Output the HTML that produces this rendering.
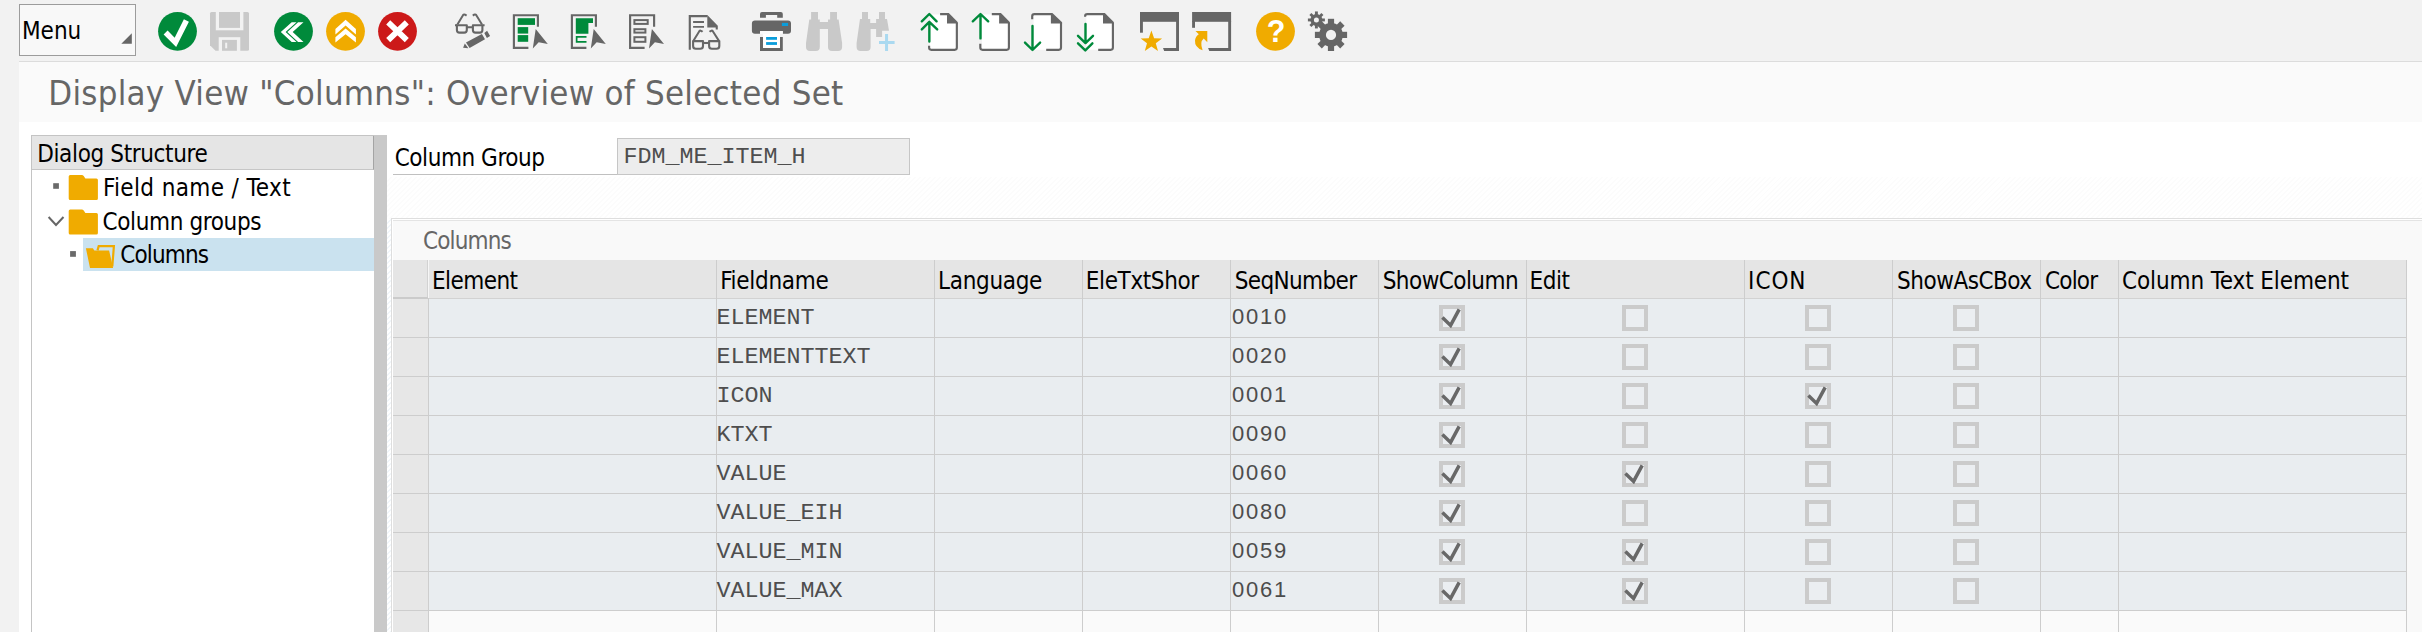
<!DOCTYPE html>
<html><head><meta charset="utf-8"><title>Display View "Columns": Overview of Selected Set</title>
<style>
html,body{margin:0;padding:0}
body{width:2422px;height:632px;overflow:hidden;position:relative;background:#f2f2f2;font-family:"DejaVu Sans Condensed", "DejaVu Sans", "Liberation Sans", sans-serif;}
.t{position:absolute;white-space:nowrap;display:block}
.u{font-family:"DejaVu Sans Condensed", "DejaVu Sans", "Liberation Sans", sans-serif;font-stretch:condensed}
.m{font-family:"Liberation Mono", monospace}
.d{font-family:"Liberation Sans",sans-serif}
.a{position:absolute}
</style></head><body>
<!-- toolbar -->
<div class="a" style="left:0;top:0;width:2422px;height:61px;background:#f2f2f2"></div>
<div class="a" style="left:19px;top:61px;width:2403px;height:1px;background:#dcdcdc"></div>
<div class="a" style="left:19px;top:4px;width:115px;height:50px;border:1px solid #9c9c9c;background:#f8f8f8"></div>
<svg class="a" style="left:119px;top:31px" width="16" height="16" viewBox="119 31 16 16"><path d="M131.8,33.2 V43.7 H121.3 Z" fill="#666"/></svg>
<svg style="position:absolute;left:0;top:0" width="1400" height="62" viewBox="0 0 1400 62"><circle cx="177.5" cy="31.3" r="19.4" fill="#008a3b"/><path d="M165.6,32.6 L175.4,42.4 L186.4,20.6" fill="none" stroke="#fff" stroke-width="5.6" stroke-linejoin="miter"/><path d="M211.5,12 H247.5 Q249,12 249,13.5 V49.3 Q249,50.8 247.5,50.8 H215.5 L210,45.3 V13.5 Q210,12 211.5,12 Z" fill="#c9c9c9"/><rect x="215.8" y="11.5" width="27.6" height="18.8" fill="#f2f2f2"/><rect x="219" y="12" width="21" height="15.9" fill="#c9c9c9"/><rect x="218.7" y="37.2" width="21.6" height="14" fill="#f2f2f2"/><rect x="222" y="39.9" width="14.9" height="10.9" fill="#c9c9c9"/><rect x="225.2" y="42.7" width="2" height="5.6" fill="#f2f2f2"/><circle cx="293.5" cy="31.3" r="19.4" fill="#008a3b"/><path d="M280.8,32 L291.7,22.3 H296.5 L285.6,32 L296.5,41.9 H291.7 Z M287.3,32 L298.1,22.3 H303.5 L292.7,32 L303.5,41.9 H298.1 Z" fill="#fff"/><circle cx="345.5" cy="31.3" r="19.4" fill="#f0ab00"/><path d="M345.6,19.8 L355.9,29.1 V34.6 L345.6,25.6 L335.4,34.6 V29.1 Z M345.6,28.6 L355.9,37.2 V42.4 L345.6,34.2 L335.4,42.4 V37.2 Z" fill="#fff"/><circle cx="397.5" cy="31.3" r="19.4" fill="#cc1919"/><path d="M388.2,22.4 L406.8,40.2 M406.8,22.4 L388.2,40.2" stroke="#fff" stroke-width="5.8" fill="none"/><g fill="none" stroke="#666666" stroke-width="2.1" stroke-linejoin="round"><path d="M456.9,25.3 H466.8 V30 Q466.8,32.6 464.2,32.6 H459.5 Q456.9,32.6 456.9,30 Z"/><path d="M472.9,25.3 H482.4 V30 Q482.4,32.6 479.8,32.6 H475.5 Q472.9,32.6 472.9,30 Z"/><path d="M466.8,27.3 H472.9 M455,25.3 H457 M482.4,25.3 H484.6"/><path d="M457.4,24.6 L463,15.2 Q464,13.8 466.6,15.6 M482,24.6 L476.3,15.2 Q475.3,13.8 472.8,15.6" stroke-width="2"/></g><path d="M463.1,47.8 L464.8,43.6 L468.4,48.3 Z M466,42.6 L481.9,34 L485,39.3 L469.6,48 Z M484.3,33 L487.1,30.8 L490.1,36 L486.9,37.9 Z" fill="#666666"/><path d="M537.9,26.8 V15.2 H513.9 V47.9 H528.4" fill="none" stroke="#666666" stroke-width="2.15"/><path d="M535.7,29.1 L547.8,44 L538.7,42.2 L532.8,48.4 Z" fill="#666666"/><rect x="517.7" y="18.2" width="17.3" height="6.7" fill="#008a3b"/><rect x="517.7" y="27.1" width="10.5" height="6.5" fill="#008a3b"/><rect x="517.7" y="35.1" width="10.5" height="6.7" fill="#008a3b"/><path d="M595.9,26.8 V15.2 H571.9 V47.9 H586.4" fill="none" stroke="#666666" stroke-width="2.15"/><path d="M593.7,29.1 L605.8,44 L596.7,42.2 L590.8,48.4 Z" fill="#666666"/><path d="M575.8,18.2 H593 V22.9 H588.4 V33.8 H575.8 Z" fill="#008a3b"/><path d="M586.5,36.85 H576.65 V41.95 H586.5" fill="none" stroke="#008a3b" stroke-width="1.7"/><path d="M654.1,26.8 V15.2 H630.1 V47.9 H644.6" fill="none" stroke="#666666" stroke-width="2.15"/><path d="M651.9,29.1 L664.0,44 L654.9,42.2 L649.0,48.4 Z" fill="#666666"/><g fill="none" stroke="#666666" stroke-width="2"><rect x="634.4" y="20.1" width="13.3" height="3.8"/><rect x="634.4" y="29.2" width="11" height="3.4"/><rect x="634.4" y="37.2" width="11" height="4.6"/></g><path d="M689.8,49.8 V16.1 H707.5" fill="none" stroke="#666666" stroke-width="2.15"/><path d="M707.3,15.1 L717.8,25.8 V29.5 H715.7 V27.6 H707.3 Z" fill="#666666"/><path d="M693.1,22 H704 M693.1,26.9 H704" stroke="#666666" stroke-width="1.9"/><g fill="none" stroke="#666666" stroke-width="2.1" stroke-linejoin="round"><path d="M693.1,41.1 H703 V46 Q703,48.8 700.2,48.8 H695.9 Q693.1,48.8 693.1,46 Z"/><path d="M709.1,41.1 H719.3 V46 Q719.3,48.8 716.5,48.8 H711.9 Q709.1,48.8 709.1,46 Z"/><path d="M703,43 H709.1"/><path d="M693.6,40.6 L699.3,31.2 Q700.3,29.8 702.6,31.8 M718.8,40.6 L712.8,31.2 Q711.8,29.8 709.5,31.8" stroke-width="2"/></g><path d="M760,17.8 V14 Q760,12 762,12 H780.8 Q782.8,12 782.8,14 V17.8 H777.2 V15.1 H765.9 V17.8 Z" fill="#666666"/><path d="M755,20.5 H788 Q791,20.5 791,23.5 V30.8 Q791,33.8 788,33.8 H782.8 V31.1 H760 V33.8 H755 Q751.9,33.8 751.9,30.8 V23.5 Q751.9,20.5 755,20.5 Z" fill="#666666"/><rect x="781.9" y="22.9" width="6.2" height="3.1" fill="#0a9ddb"/><rect x="763" y="31.1" width="17" height="16.9" fill="#fff"/><rect x="760" y="31.1" width="22.8" height="2.7" fill="#fbfbfb"/><path d="M760,37 H763 V47.9 H780 V37 H782.8 V50.9 H760 Z" fill="#666666"/><rect x="766.1" y="37" width="10.9" height="2.8" fill="#0a9ddb"/><rect x="766.1" y="42.1" width="10.9" height="2.8" fill="#0a9ddb"/><path d="M811.1,12 H818 V19.6 H819.8 V22 H828 V19.6 H830.1 V12 H837 V19.6 H838.6 L842.1,43 V47 Q842.1,50.9 838.1,50.9 H832 Q828,50.9 828,47 V29 H819.8 V47 Q819.8,50.9 815.8,50.9 H810 Q806,50.9 806,47 V43 L809.3,19.6 H811.1 Z" fill="#c9c9c9"/><path d="M862,12 H868 V19.1 H870.2 V23.1 H876.1 V19.1 H879 V12 H885 V19.1 H887 L889,30.7 H882.1 V37 H876.1 V29 H870.6 V47 Q870.6,50.9 866.6,50.9 H860.6 Q856.6,50.9 856.6,47 V43 L860,19.1 H862 Z" fill="#c9c9c9"/><path d="M886.55,34.1 V50.9 M879,42.55 H894.6" stroke="#aad9f0" stroke-width="3" fill="none"/><path d="M930,14.4 H948.5 L956.9,23 V49.8 H930 Z" fill="#fff"/><path d="M940.1,14.05 H948 M956.85,23 V47.6 Q956.85,49.85 954.6,49.85 H931.35 Q929.1,49.85 929.1,47.6 V45.7" fill="none" stroke="#666666" stroke-width="2.15"/><path d="M947,13 H948.8 L957.9,22.2 V23.6 H947 Z" fill="#666666"/><path d="M929.35,22 V41.6 M921.8,21.3 L929.3,14 L936.6,21.3 M921.8,29.4 L929.3,21.9 L937.2,29.4" fill="none" stroke="#008a3b" stroke-width="2.4" stroke-linecap="round" stroke-linejoin="round"/><path d="M982,14.4 H1000.5 L1009,23 V49.8 H982 Z" fill="#fff"/><path d="M991.8,14.05 H1000 M1008.9,23 V47.6 Q1008.9,49.85 1006.65,49.85 H982.55 Q980.3,49.85 980.3,47.6 V43.7" fill="none" stroke="#666666" stroke-width="2.15"/><path d="M999.1,13 H1000.9 L1010,22.2 V23.6 H999.1 Z" fill="#666666"/><path d="M980.5,14.2 V38.4 M972.8,21.3 L980.5,14 L988.2,21.3" fill="none" stroke="#008a3b" stroke-width="2.4" stroke-linecap="round" stroke-linejoin="round"/><path d="M1033.6,14.4 H1052 L1061,23 V49.8 H1033.6 Z" fill="#fff"/><path d="M1032.2,19.3 V16.3 Q1032.2,14.05 1034.45,14.05 H1052 M1061,23 V47.6 Q1061,49.85 1058.75,49.85 H1046.2" fill="none" stroke="#666666" stroke-width="2.15"/><path d="M1050.9,13 H1052.4 L1062.1,22.2 V23.6 H1050.9 Z" fill="#666666"/><path d="M1032.5,26 V49.8 M1025,42.6 L1032.5,50 L1040.1,42.6" fill="none" stroke="#008a3b" stroke-width="2.4" stroke-linecap="round" stroke-linejoin="round"/><path d="M1086.3,14.4 H1104 L1112.9,23 V49.8 H1086.3 Z" fill="#fff"/><path d="M1085.1,16.7 V16.3 Q1085.1,14.05 1087.35,14.05 H1104 M1112.9,23 V47.6 Q1112.9,49.85 1110.65,49.85 H1098.2" fill="none" stroke="#666666" stroke-width="2.15"/><path d="M1103,13 H1104.8 L1114,22.2 V23.6 H1103 Z" fill="#666666"/><path d="M1085.5,24 V42.5 M1078,35.8 L1085.5,43.1 L1093,35.8 M1078,43.3 L1085.3,50.4 L1092.4,43.3" fill="none" stroke="#008a3b" stroke-width="2.4" stroke-linecap="round" stroke-linejoin="round"/><rect x="1140" y="12" width="39" height="9.8" fill="#666666"/><rect x="1140" y="21" width="2.9" height="11.7" fill="#666666"/><path d="M1176.1,21 H1179 V50.9 H1164.2 L1163,48 H1176.1 Z" fill="#666666"/><polygon points="1151.4,30.6 1154.1,38.2 1162.1,38.4 1155.8,43.3 1158.0,51.0 1151.4,46.5 1144.8,51.0 1147.0,43.3 1140.7,38.4 1148.7,38.2" fill="#f0ab00"/><rect x="1192.1" y="12" width="39" height="9.8" fill="#666666"/><rect x="1192.1" y="21" width="2.9" height="6.8" fill="#666666"/><path d="M1228.1999999999998,21 H1231.1 V50.9 H1209.3 L1208.1,48 H1228.1999999999998 Z" fill="#666666"/><path d="M1195.5,31 H1207.3 V42.3 L1203.7,38.5 Q1199.5,42 1202.6,50.3 Q1194.5,47.5 1195,40.5 Q1195.3,36.8 1198.8,34.3 Z" fill="#f0ab00"/><circle cx="1275.5" cy="31.3" r="19.4" fill="#f0ab00"/><text x="1276" y="42" font-family="Liberation Sans, sans-serif" font-weight="bold" font-size="30.5" fill="#fff" text-anchor="middle">?</text><path d="M1342.9,34.9 A11.9,11.9 0 1,0 1319.1,34.9 A11.9,11.9 0 1,0 1342.9,34.9 Z M1336.1,34.9 A5.1,5.1 0 1,1 1325.9,34.9 A5.1,5.1 0 1,1 1336.1,34.9 Z" fill="#666666" fill-rule="evenodd"/><g transform="rotate(0 1331.0 34.9)"><rect x="1327.9" y="18.799999999999997" width="6.2" height="7.600000000000001" fill="#666666"/><rect x="1327.9" y="43.4" width="6.2" height="7.600000000000001" fill="#666666"/></g><g transform="rotate(45 1331.0 34.9)"><rect x="1327.9" y="18.799999999999997" width="6.2" height="7.600000000000001" fill="#666666"/><rect x="1327.9" y="43.4" width="6.2" height="7.600000000000001" fill="#666666"/></g><g transform="rotate(90 1331.0 34.9)"><rect x="1327.9" y="18.799999999999997" width="6.2" height="7.600000000000001" fill="#666666"/><rect x="1327.9" y="43.4" width="6.2" height="7.600000000000001" fill="#666666"/></g><g transform="rotate(135 1331.0 34.9)"><rect x="1327.9" y="18.799999999999997" width="6.2" height="7.600000000000001" fill="#666666"/><rect x="1327.9" y="43.4" width="6.2" height="7.600000000000001" fill="#666666"/></g><path d="M1322.4,19.95 A6.0,6.0 0 1,0 1310.4,19.95 A6.0,6.0 0 1,0 1322.4,19.95 Z M1318.9,19.95 A2.5,2.5 0 1,1 1313.9,19.95 A2.5,2.5 0 1,1 1318.9,19.95 Z" fill="#666666" fill-rule="evenodd"/><g transform="rotate(0 1316.4 19.95)"><rect x="1314.95" y="11.45" width="2.9" height="4.25" fill="#666666"/><rect x="1314.95" y="24.2" width="2.9" height="4.25" fill="#666666"/></g><g transform="rotate(45 1316.4 19.95)"><rect x="1314.95" y="11.45" width="2.9" height="4.25" fill="#666666"/><rect x="1314.95" y="24.2" width="2.9" height="4.25" fill="#666666"/></g><g transform="rotate(90 1316.4 19.95)"><rect x="1314.95" y="11.45" width="2.9" height="4.25" fill="#666666"/><rect x="1314.95" y="24.2" width="2.9" height="4.25" fill="#666666"/></g><g transform="rotate(135 1316.4 19.95)"><rect x="1314.95" y="11.45" width="2.9" height="4.25" fill="#666666"/><rect x="1314.95" y="24.2" width="2.9" height="4.25" fill="#666666"/></g></svg>
<!-- title -->
<div class="a" style="left:19px;top:62px;width:2403px;height:60px;background:#fafafa"></div>
<!-- content -->
<div class="a" style="left:19px;top:122px;width:2403px;height:510px;background:#fff"></div>
<!-- hatch strip under form -->
<div class="a" style="left:387px;top:177px;width:2035px;height:42px;background:repeating-linear-gradient(135deg,#fff 0,#fff 2.2px,#fcfcfc 2.2px,#fcfcfc 3.6px)"></div>
<div class="a" style="left:387px;top:219px;width:5px;height:413px;background:repeating-linear-gradient(135deg,#fff 0,#fff 2.2px,#f1f6fa 2.2px,#f1f6fa 3.6px)"></div>
<!-- tree panel -->
<div class="a" style="left:31px;top:135px;width:343px;height:500px;background:#fff;border-left:1px solid #c4c4c4;border-top:1px solid #c4c4c4;box-sizing:border-box"></div>
<div class="a" style="left:32px;top:136px;width:342px;height:34px;background:#e5e5e5;border-bottom:1px solid #c6c6c6;border-right:1px solid #a4a4a4;box-sizing:border-box"></div>
<div class="a" style="left:374px;top:135px;width:13px;height:500px;background:#c9c9c9"></div>
<div class="a" style="left:83px;top:238px;width:290.6px;height:32.6px;background:#cae2ef"></div>
<svg class="a" style="left:40px;top:170px" width="90" height="105" viewBox="40 170 90 105">
<rect x="53.2" y="183.2" width="5.7" height="5.6" fill="#6a6a6a"/>
<rect x="70.1" y="251.1" width="5.8" height="5.7" fill="#6a6a6a"/>
<path d="M48.6,217 L56,225 L63.5,217" fill="none" stroke="#666" stroke-width="2"/>
<path d="M70.2,175 H81.8 Q83,175 83.7,176 L85.4,178.6 H96.4 Q97.9,178.6 97.9,180.1 V198.5 Q97.9,200 96.4,200 H70.2 Q68.7,200 68.7,198.5 V176.5 Q68.7,175 70.2,175 Z" fill="#f0ab00"/>
<path d="M70.2,209.4 H81.8 Q83,209.4 83.7,210.4 L85.4,213 H96.4 Q97.9,213 97.9,214.5 V232.9 Q97.9,234.4 96.4,234.4 H70.2 Q68.7,234.4 68.7,232.9 V210.9 Q68.7,209.4 70.2,209.4 Z" fill="#f0ab00"/>
<path d="M97.5,250.4 L98.7,246.1 H113.9 L112.3,266.5" fill="none" stroke="#f0ab00" stroke-width="2.2"/>
<path d="M85.9,248.2 H92.9 L94.3,250.4 H109.1 L112.2,264 L113.1,267.9 H90 Z" fill="#f0ab00"/>
</svg>
<!-- form row -->
<div class="a" style="left:393px;top:173.6px;width:225px;height:1.2px;background:#c0c0c0"></div>
<div class="a" style="left:617px;top:138.2px;width:293px;height:36.4px;background:#ededed;border:1.2px solid #c6c6c6;box-sizing:border-box"></div>
<!-- group box -->
<div class="a" style="left:391px;top:218px;width:2035px;height:420px;background:#fff;border:1px solid #dedede;box-sizing:border-box"></div>
<div class="a" style="left:393px;top:220px;width:2035px;height:420px;background:#f9f9f9;border-top:1px solid #e4e4e4"></div>
<div style="position:absolute;left:393px;top:260px;width:2013.6px;height:38px;background:#e5e5e5"></div><div style="position:absolute;left:393px;top:298px;width:2013.6px;height:312px;background:#e9edf0"></div><div style="position:absolute;left:393px;top:610px;width:2013.6px;height:40px;background:#fafafa"></div><div style="position:absolute;left:393px;top:298px;width:35px;height:340px;background:#e7e7e7"></div><svg class="a" style="left:0;top:0" width="2422" height="632" viewBox="0 0 2422 632"><rect x="393" y="298" width="2014" height="1" fill="#d2d2d2"/><rect x="393" y="337" width="2014" height="1" fill="#cdcdcd"/><rect x="393" y="376" width="2014" height="1" fill="#cdcdcd"/><rect x="393" y="415" width="2014" height="1" fill="#cdcdcd"/><rect x="393" y="454" width="2014" height="1" fill="#cdcdcd"/><rect x="393" y="493" width="2014" height="1" fill="#cdcdcd"/><rect x="393" y="532" width="2014" height="1" fill="#cdcdcd"/><rect x="393" y="571" width="2014" height="1" fill="#cdcdcd"/><rect x="393" y="610" width="2014" height="1" fill="#cdcdcd"/><rect x="428" y="260" width="1" height="380" fill="#cdcdcd"/><rect x="716" y="260" width="1" height="380" fill="#cdcdcd"/><rect x="934" y="260" width="1" height="380" fill="#cdcdcd"/><rect x="1082" y="260" width="1" height="380" fill="#cdcdcd"/><rect x="1230" y="260" width="1" height="380" fill="#cdcdcd"/><rect x="1378" y="260" width="1" height="380" fill="#cdcdcd"/><rect x="1526" y="260" width="1" height="380" fill="#cdcdcd"/><rect x="1744" y="260" width="1" height="380" fill="#cdcdcd"/><rect x="1892" y="260" width="1" height="380" fill="#cdcdcd"/><rect x="2040" y="260" width="1" height="380" fill="#cdcdcd"/><rect x="2118" y="260" width="1" height="380" fill="#cdcdcd"/><rect x="2406" y="260" width="1" height="380" fill="#cdcdcd"/><rect x="427" y="260" width="1" height="38" fill="#d2d2d2"/><rect x="428" y="260" width="1" height="38" fill="#f6f6f6"/><rect x="393" y="297" width="35" height="2" fill="#cbcbcb"/><rect x="1441" y="307" width="22" height="22" fill="#ebeef1" stroke="#cbcbcb" stroke-width="4"/><path d="M1442.4,317.4 L1450.6,325.4 L1459.2,309.4" fill="none" stroke="#686868" stroke-width="3.5"/><rect x="1624" y="307" width="22" height="22" fill="#ebeef1" stroke="#cbcbcb" stroke-width="4"/><rect x="1807" y="307" width="22" height="22" fill="#ebeef1" stroke="#cbcbcb" stroke-width="4"/><rect x="1955" y="307" width="22" height="22" fill="#ebeef1" stroke="#cbcbcb" stroke-width="4"/><rect x="1441" y="346" width="22" height="22" fill="#ebeef1" stroke="#cbcbcb" stroke-width="4"/><path d="M1442.4,356.4 L1450.6,364.4 L1459.2,348.4" fill="none" stroke="#686868" stroke-width="3.5"/><rect x="1624" y="346" width="22" height="22" fill="#ebeef1" stroke="#cbcbcb" stroke-width="4"/><rect x="1807" y="346" width="22" height="22" fill="#ebeef1" stroke="#cbcbcb" stroke-width="4"/><rect x="1955" y="346" width="22" height="22" fill="#ebeef1" stroke="#cbcbcb" stroke-width="4"/><rect x="1441" y="385" width="22" height="22" fill="#ebeef1" stroke="#cbcbcb" stroke-width="4"/><path d="M1442.4,395.4 L1450.6,403.4 L1459.2,387.4" fill="none" stroke="#686868" stroke-width="3.5"/><rect x="1624" y="385" width="22" height="22" fill="#ebeef1" stroke="#cbcbcb" stroke-width="4"/><rect x="1807" y="385" width="22" height="22" fill="#ebeef1" stroke="#cbcbcb" stroke-width="4"/><path d="M1808.4,395.4 L1816.6,403.4 L1825.2,387.4" fill="none" stroke="#686868" stroke-width="3.5"/><rect x="1955" y="385" width="22" height="22" fill="#ebeef1" stroke="#cbcbcb" stroke-width="4"/><rect x="1441" y="424" width="22" height="22" fill="#ebeef1" stroke="#cbcbcb" stroke-width="4"/><path d="M1442.4,434.4 L1450.6,442.4 L1459.2,426.4" fill="none" stroke="#686868" stroke-width="3.5"/><rect x="1624" y="424" width="22" height="22" fill="#ebeef1" stroke="#cbcbcb" stroke-width="4"/><rect x="1807" y="424" width="22" height="22" fill="#ebeef1" stroke="#cbcbcb" stroke-width="4"/><rect x="1955" y="424" width="22" height="22" fill="#ebeef1" stroke="#cbcbcb" stroke-width="4"/><rect x="1441" y="463" width="22" height="22" fill="#ebeef1" stroke="#cbcbcb" stroke-width="4"/><path d="M1442.4,473.4 L1450.6,481.4 L1459.2,465.4" fill="none" stroke="#686868" stroke-width="3.5"/><rect x="1624" y="463" width="22" height="22" fill="#ebeef1" stroke="#cbcbcb" stroke-width="4"/><path d="M1625.4,473.4 L1633.6,481.4 L1642.2,465.4" fill="none" stroke="#686868" stroke-width="3.5"/><rect x="1807" y="463" width="22" height="22" fill="#ebeef1" stroke="#cbcbcb" stroke-width="4"/><rect x="1955" y="463" width="22" height="22" fill="#ebeef1" stroke="#cbcbcb" stroke-width="4"/><rect x="1441" y="502" width="22" height="22" fill="#ebeef1" stroke="#cbcbcb" stroke-width="4"/><path d="M1442.4,512.4 L1450.6,520.4 L1459.2,504.4" fill="none" stroke="#686868" stroke-width="3.5"/><rect x="1624" y="502" width="22" height="22" fill="#ebeef1" stroke="#cbcbcb" stroke-width="4"/><rect x="1807" y="502" width="22" height="22" fill="#ebeef1" stroke="#cbcbcb" stroke-width="4"/><rect x="1955" y="502" width="22" height="22" fill="#ebeef1" stroke="#cbcbcb" stroke-width="4"/><rect x="1441" y="541" width="22" height="22" fill="#ebeef1" stroke="#cbcbcb" stroke-width="4"/><path d="M1442.4,551.4 L1450.6,559.4 L1459.2,543.4" fill="none" stroke="#686868" stroke-width="3.5"/><rect x="1624" y="541" width="22" height="22" fill="#ebeef1" stroke="#cbcbcb" stroke-width="4"/><path d="M1625.4,551.4 L1633.6,559.4 L1642.2,543.4" fill="none" stroke="#686868" stroke-width="3.5"/><rect x="1807" y="541" width="22" height="22" fill="#ebeef1" stroke="#cbcbcb" stroke-width="4"/><rect x="1955" y="541" width="22" height="22" fill="#ebeef1" stroke="#cbcbcb" stroke-width="4"/><rect x="1441" y="580" width="22" height="22" fill="#ebeef1" stroke="#cbcbcb" stroke-width="4"/><path d="M1442.4,590.4 L1450.6,598.4 L1459.2,582.4" fill="none" stroke="#686868" stroke-width="3.5"/><rect x="1624" y="580" width="22" height="22" fill="#ebeef1" stroke="#cbcbcb" stroke-width="4"/><path d="M1625.4,590.4 L1633.6,598.4 L1642.2,582.4" fill="none" stroke="#686868" stroke-width="3.5"/><rect x="1807" y="580" width="22" height="22" fill="#ebeef1" stroke="#cbcbcb" stroke-width="4"/><rect x="1955" y="580" width="22" height="22" fill="#ebeef1" stroke="#cbcbcb" stroke-width="4"/></svg>
<span class="t u" style="left:22.0px;top:16.9px;font-size:24px;line-height:29px;letter-spacing:-0.017px;color:#000">Menu</span><span class="t u" style="left:48.22px;top:73.1px;font-size:34.5px;line-height:41px;letter-spacing:0.261px;color:#666">Display View "Columns": Overview of Selected Set</span><span class="t u" style="left:37.22px;top:139.5px;font-size:24px;line-height:29px;letter-spacing:-0.363px;color:#000">Dialog Structure</span><span class="t u" style="left:102.94px;top:173.7px;font-size:24px;line-height:29px;letter-spacing:0.36px;color:#000">Field name / Text</span><span class="t u" style="left:102.5px;top:207.7px;font-size:24px;line-height:29px;letter-spacing:-0.373px;color:#000">Column groups</span><span class="t u" style="left:120.22px;top:240.7px;font-size:24px;line-height:29px;letter-spacing:-0.844px;color:#000">Columns</span><span class="t u" style="left:394.72px;top:143.7px;font-size:24px;line-height:29px;letter-spacing:-0.45px;color:#000">Column Group</span><span class="t u" style="left:423.08px;top:226.7px;font-size:24px;line-height:29px;letter-spacing:-0.88px;color:#666">Columns</span><span class="t u" style="left:432.0px;top:266.5px;font-size:24px;line-height:29px;letter-spacing:-0.563px;color:#000">Element</span><span class="t u" style="left:720.22px;top:266.5px;font-size:24px;line-height:29px;letter-spacing:-0.294px;color:#000">Fieldname</span><span class="t u" style="left:938.0px;top:266.5px;font-size:24px;line-height:29px;letter-spacing:-0.314px;color:#000">Language</span><span class="t u" style="left:1085.86px;top:266.5px;font-size:24px;line-height:29px;letter-spacing:-0.393px;color:#000">EleTxtShor</span><span class="t u" style="left:1234.72px;top:266.5px;font-size:24px;line-height:29px;letter-spacing:-0.645px;color:#000">SeqNumber</span><span class="t u" style="left:1382.72px;top:266.5px;font-size:24px;line-height:29px;letter-spacing:-0.558px;color:#000">ShowColumn</span><span class="t u" style="left:1529.5px;top:266.5px;font-size:24px;line-height:29px;letter-spacing:-0.477px;color:#000">Edit</span><span class="t u" style="left:1748.08px;top:266.5px;font-size:24px;line-height:29px;letter-spacing:0.947px;color:#000">ICON</span><span class="t u" style="left:1897.08px;top:266.5px;font-size:24px;line-height:29px;letter-spacing:-0.492px;color:#000">ShowAsCBox</span><span class="t u" style="left:2044.94px;top:266.5px;font-size:24px;line-height:29px;letter-spacing:-0.789px;color:#000">Color</span><span class="t u" style="left:2122.0px;top:266.5px;font-size:24px;line-height:29px;letter-spacing:-0.111px;color:#000">Column Text Element</span><span class="t m" style="left:623.4px;top:143.2px;font-size:23.4px;line-height:28px;letter-spacing:-0.037px;color:#4e4e4e;transform:scaleY(0.915);transform-origin:0 20.0px">FDM_ME_ITEM_H</span><span class="t m" style="left:716.6px;top:304.0px;font-size:23.4px;line-height:28px;letter-spacing:-0.037px;color:#4e4e4e;transform:scaleY(0.915);transform-origin:0 20.0px">ELEMENT</span><span class="t d" style="left:1232.0px;top:303.7px;font-size:22px;line-height:26px;letter-spacing:1.77px;color:#4c4c4c">0010</span><span class="t m" style="left:716.6px;top:343.0px;font-size:23.4px;line-height:28px;letter-spacing:-0.037px;color:#4e4e4e;transform:scaleY(0.915);transform-origin:0 20.0px">ELEMENTTEXT</span><span class="t d" style="left:1232.0px;top:342.7px;font-size:22px;line-height:26px;letter-spacing:1.77px;color:#4c4c4c">0020</span><span class="t m" style="left:716.6px;top:382.0px;font-size:23.4px;line-height:28px;letter-spacing:-0.037px;color:#4e4e4e;transform:scaleY(0.915);transform-origin:0 20.0px">ICON</span><span class="t d" style="left:1232.0px;top:381.7px;font-size:22px;line-height:26px;letter-spacing:1.77px;color:#4c4c4c">0001</span><span class="t m" style="left:716.6px;top:421.0px;font-size:23.4px;line-height:28px;letter-spacing:-0.037px;color:#4e4e4e;transform:scaleY(0.915);transform-origin:0 20.0px">KTXT</span><span class="t d" style="left:1232.0px;top:420.7px;font-size:22px;line-height:26px;letter-spacing:1.77px;color:#4c4c4c">0090</span><span class="t m" style="left:716.6px;top:460.0px;font-size:23.4px;line-height:28px;letter-spacing:-0.037px;color:#4e4e4e;transform:scaleY(0.915);transform-origin:0 20.0px">VALUE</span><span class="t d" style="left:1232.0px;top:459.7px;font-size:22px;line-height:26px;letter-spacing:1.77px;color:#4c4c4c">0060</span><span class="t m" style="left:716.6px;top:499.0px;font-size:23.4px;line-height:28px;letter-spacing:-0.037px;color:#4e4e4e;transform:scaleY(0.915);transform-origin:0 20.0px">VALUE_EIH</span><span class="t d" style="left:1232.0px;top:498.7px;font-size:22px;line-height:26px;letter-spacing:1.77px;color:#4c4c4c">0080</span><span class="t m" style="left:716.6px;top:538.0px;font-size:23.4px;line-height:28px;letter-spacing:-0.037px;color:#4e4e4e;transform:scaleY(0.915);transform-origin:0 20.0px">VALUE_MIN</span><span class="t d" style="left:1232.0px;top:537.6999999999999px;font-size:22px;line-height:26px;letter-spacing:1.77px;color:#4c4c4c">0059</span><span class="t m" style="left:716.6px;top:577.0px;font-size:23.4px;line-height:28px;letter-spacing:-0.037px;color:#4e4e4e;transform:scaleY(0.915);transform-origin:0 20.0px">VALUE_MAX</span><span class="t d" style="left:1232.0px;top:576.6999999999999px;font-size:22px;line-height:26px;letter-spacing:1.77px;color:#4c4c4c">0061</span>
</body></html>
